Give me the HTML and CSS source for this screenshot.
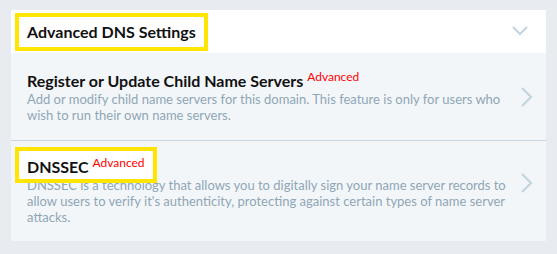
FILE: index.html
```html
<!DOCTYPE html>
<html lang="en">
<head>
    <meta charset="UTF-8">
    <meta name="viewport" content="width=device-width, initial-scale=1.0">
    <title>Advanced DNS Settings</title>
    <link rel="stylesheet" href="styles.css">
</head>
<body>

    <div class="panel">

        <!-- Panel Header -->
        <div class="panel-header">
            <span class="panel-title marked">Advanced DNS Settings</span>
            <svg class="chevron-down" width="16" height="10" viewBox="0 0 16 10">
                <polyline points="1,1 8,8 15,1" fill="none" stroke="#c3d4df" stroke-width="2"/>
            </svg>
        </div>

        <!-- Child Name Servers -->
        <div class="item item-ns">
            <div class="item-body">
                <div class="item-title">Register or Update Child Name Servers <sup class="tag">Advanced</sup></div>
                <p class="item-desc">Add or modify child name servers for this domain. This feature is only for users who wish to run their own name servers.</p>
            </div>
            <svg class="chevron-right" width="12" height="20" viewBox="0 0 12 20">
                <polyline points="1,1 10,10 1,19" fill="none" stroke="#c3d4df" stroke-width="2.2"/>
            </svg>
        </div>

        <!-- DNSSEC -->
        <div class="item item-dnssec">
            <div class="item-body">
                <div class="item-title marked boxed">DNSSEC <sup class="tag">Advanced</sup></div>
                <p class="item-desc">DNSSEC is a technology that allows you to digitally sign your name server records to allow users to verify it's authenticity, protecting against certain types of name server attacks.</p>
            </div>
            <svg class="chevron-right" width="12" height="20" viewBox="0 0 12 20">
                <polyline points="1,1 10,10 1,19" fill="none" stroke="#c3d4df" stroke-width="2.2"/>
            </svg>
        </div>

    </div>

</body>
</html>
```

FILE: styles.css
```css
body {
    margin: 0;
    font-family: Lato, "Open Sans", sans-serif;
    background: #e8ecf0;
    color: #111;
}

/* Panel */
.panel {
    margin: 10px 11px 0 11px;
    width: 535px;
    background: #f3f6f9;
}

.panel-header {
    height: 43px;
    background: white;
    display: flex;
    align-items: flex-start;
    justify-content: space-between;
}

.panel-title {
    margin: 3px 0 0 4px;
    padding: 5px 8px;
    font-size: 16px;
    font-weight: bold;
    line-height: 20px;
}

.chevron-down {
    margin: 16px 18px 0 0;
}

/* Yellow highlight frame */
.marked {
    display: inline-block;
    border: 4px solid #ffe500;
    background: white;
}

/* Items */
.item {
    display: flex;
    align-items: center;
    padding: 0 13px 0 16px;
}

.item-ns {
    padding-top: 18px;
    padding-bottom: 17px;
}

.item-dnssec {
    border-top: 1px solid #c9d7e1;
    padding-bottom: 16px;
}

.item-body {
    flex: 1;
}

.item-title {
    font-size: 16px;
    font-weight: bold;
    line-height: 20px;
}

.item-title.boxed {
    margin: 6px 0 -6px -12px;
    padding: 6px 8px 2px 8px;
    position: relative;
}

.tag {
    color: #ff0000;
    font-size: 12px;
    font-weight: normal;
    vertical-align: 6px;
    line-height: 0;
}

.item-desc {
    margin: 0;
    max-width: 480px;
    font-size: 13px;
    line-height: 16px;
    color: #8fa6b6;
}
```
